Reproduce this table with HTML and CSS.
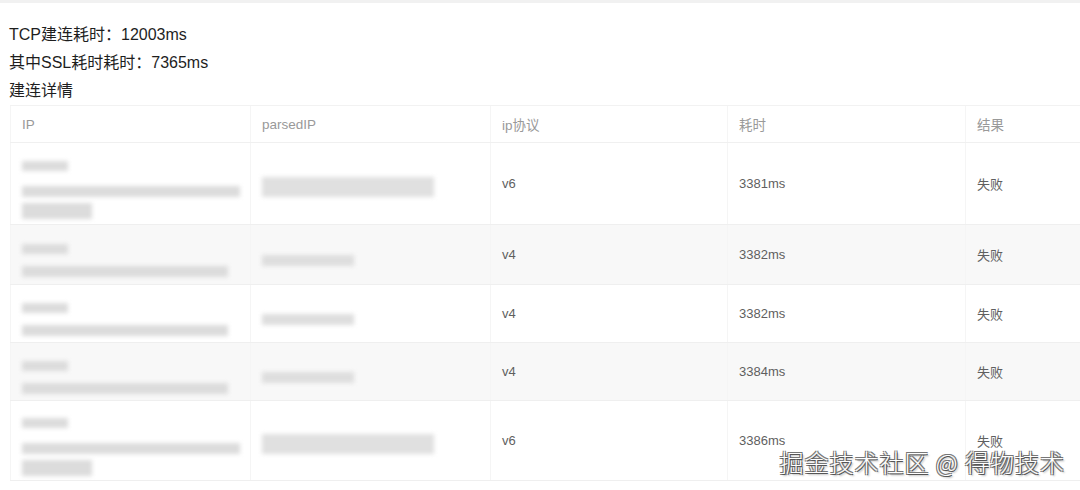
FILE: index.html
```html
<!DOCTYPE html>
<html lang="zh">
<head>
<meta charset="utf-8">
<link rel="stylesheet" href="styles.css">
</head>
<body>
<div class="page">
  <div class="info">
    <p class="line">TCP建连耗时：12003ms</p>
    <p class="line">其中SSL耗时耗时：7365ms</p>
    <p class="line">建连详情</p>
  </div>
  <table class="grid">
    <colgroup>
      <col class="c1"><col class="c2"><col class="c3"><col class="c4"><col class="c5">
    </colgroup>
    <thead>
      <tr><th>IP</th><th>parsedIP</th><th>ip协议</th><th>耗时</th><th>结果</th></tr>
    </thead>
    <tbody>
      <tr class="tall">
        <td class="masked"><div class="blur"><span class="b b-s"></span><span class="b b-l"></span><span class="b b-m"></span></div></td>
        <td class="masked"><div class="blur"><span class="b b-p2"></span></div></td>
        <td>v6</td><td>3381ms</td><td>失败</td>
      </tr>
      <tr class="alt">
        <td class="masked"><div class="blur"><span class="b b-s"></span><span class="b b-l2"></span></div></td>
        <td class="masked"><div class="blur"><span class="b b-p"></span></div></td>
        <td>v4</td><td>3382ms</td><td>失败</td>
      </tr>
      <tr class="short">
        <td class="masked"><div class="blur"><span class="b b-s"></span><span class="b b-l2"></span></div></td>
        <td class="masked"><div class="blur"><span class="b b-p"></span></div></td>
        <td>v4</td><td>3382ms</td><td>失败</td>
      </tr>
      <tr class="alt">
        <td class="masked"><div class="blur"><span class="b b-s"></span><span class="b b-l2"></span></div></td>
        <td class="masked"><div class="blur"><span class="b b-p"></span></div></td>
        <td>v4</td><td>3384ms</td><td>失败</td>
      </tr>
      <tr class="tall last">
        <td class="masked"><div class="blur"><span class="b b-s"></span><span class="b b-l"></span><span class="b b-m"></span></div></td>
        <td class="masked"><div class="blur"><span class="b b-p2"></span></div></td>
        <td>v6</td><td>3386ms</td><td>失败</td>
      </tr>
    </tbody>
  </table>
  <div class="mark">掘金技术社区 @ 得物技术</div>
</div>
</body>
</html>
```
FILE: styles.css
```css
html, body {
  margin: 0;
  padding: 0;
  background: #ffffff;
}
body {
  width: 1080px;
  height: 490px;
  overflow: hidden;
  font-family: "Liberation Sans", "Noto Sans CJK SC", sans-serif;
  color: #222;
}
.page {
  position: relative;
  height: 490px;
  border-top: 3px solid #f1f1f1;
  box-sizing: border-box;
}
.info {
  padding: 18px 0 0 9px;
}
.line {
  margin: 0;
  font-size: 16px;
  line-height: 28px;
  color: #1e1e1e;
}
.grid {
  margin-left: 10px;
  width: 1110px;
  border-collapse: collapse;
  table-layout: fixed;
  font-size: 13px;
  color: #5f5f5f;
}
.c1 { width: 240px; }
.c2 { width: 240px; }
.c3 { width: 237px; }
.c4 { width: 238px; }
.grid th {
  height: 37px;
  padding: 0 11px;
  text-align: left;
  font-weight: normal;
  font-size: 13.5px;
  color: #999;
  border-top: 1px solid #f2f2f2;
  border-bottom: 1px solid #f0f0f0;
  border-left: 1px solid #f5f5f5;
  box-sizing: border-box;
}
.grid td {
  padding: 8px 11px;
  height: 43px;
  border-bottom: 1px solid #efefef;
  border-left: 1px solid #f5f5f5;
  vertical-align: middle;
}
.grid td.masked {
  padding: 14px 11px 2px;
}
.grid tr.tall td { height: 65px; }
.grid tr.short td,
.grid tr.short + tr td { height: 41px; }
.grid tr.last td { height: 63px; }
.grid tr.alt td { background: #f8f8f8; }
.blur {
  display: flex;
  flex-direction: column;
  align-items: flex-start;
  filter: blur(2.2px);
}
.b {
  display: block;
  height: 11px;
  background: #dcdcdc;
}
.b-s { width: 46px; height: 10px; margin-bottom: 12px; }
.tall .b-s { margin-bottom: 15px; }
.b-l { width: 218px; margin-bottom: 6px; }
.b-l2 { width: 206px; }
.b-m { width: 70px; height: 16px; }
.b-p { width: 92px; background: #dedede; }
.b-p2 { width: 172px; height: 20px; margin-bottom: 6px; background: #e0e0e0; }
.mark {
  position: absolute;
  right: 15px;
  bottom: 13px;
  font-family: "Noto Sans CJK SC", sans-serif;
  font-weight: 300;
  font-size: 24px;
  letter-spacing: 1px;
  line-height: 30px;
  color: #ffffff;
  text-shadow: 1px 1px 0 #555, -1px -1px 0 #777, 1px -1px 0 #777, -1px 1px 0 #777, 2px 2px 2px rgba(0,0,0,0.3);
}
```
